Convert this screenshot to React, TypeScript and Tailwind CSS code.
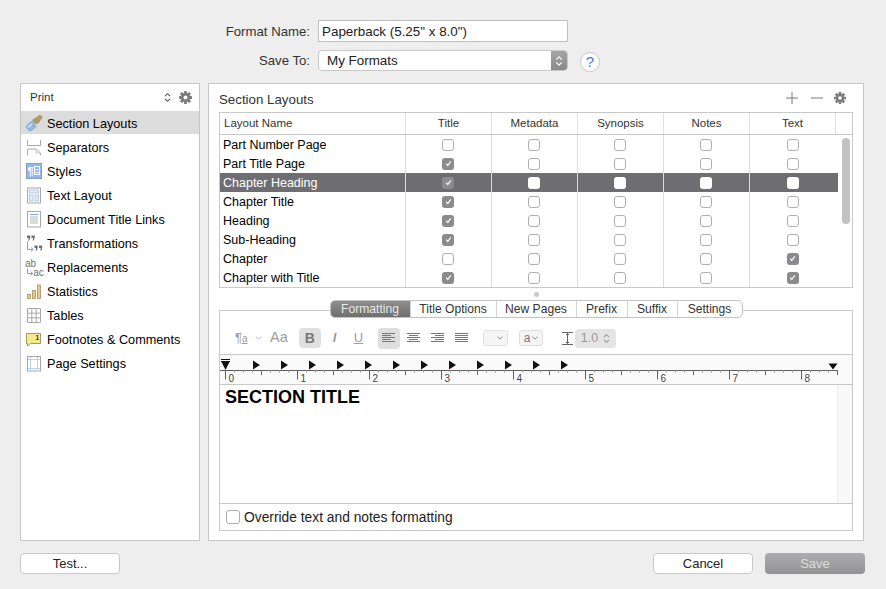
import { ReactNode } from "react";

const sans = "font-['Liberation_Sans',Arial,sans-serif]";

function Gear({ className = "" }: { className?: string }) {
    return (
        <svg viewBox="0 0 12 12" className={className} fill="#7b7b7b">
            {[0, 45, 90, 135].map((a) => (
                <rect key={a} x="4.700" y="0" width="2.600" height="12" rx=".4" transform={`rotate(${a} 6 6)`} />
            ))}
            <circle cx="6" cy="6" r="4.200" />
            <circle cx="6" cy="6" r="1.800" fill="#fff" />
        </svg>
    );
}

function UpDown({ color = "#555", className = "" }: { color?: string; className?: string }) {
    return (
        <svg viewBox="0 0 8 13" className={className} fill="none" stroke={color} strokeWidth="1.300">
            <path d="M1 5l3-3 3 3M1 8l3 3 3-3" />
        </svg>
    );
}

function Check({ checked, onDark }: { checked?: boolean; onDark?: boolean }) {
    if (checked) {
        return (
            <span className="flex h-[12px] w-[12px] items-center justify-center rounded-[3px] bg-[#8b8b8d]">
                <svg viewBox="0 0 10 10" className="h-[9px] w-[9px]" fill="none" stroke="#fff" strokeWidth="1.300">
                    <path d="M2.500 5.200l1.700 2 3.300-4.600" />
                </svg>
            </span>
        );
    }
    if (onDark) {
        return <span className="h-[12px] w-[12px] rounded-[3px] bg-white" />;
    }
    return <span className="h-[12px] w-[12px] rounded-[3px] border border-[#b0b0b0] bg-white" />;
}

// sidebar icons, drawn on a 20x20 box
const icons: Record<string, ReactNode> = {
    brush: (
        <>
            <path d="M2 13.500l5-5 5 5-4.500 4c-1.500.5-2.500 0-3.500-1-.5-1-1.500-2-2-3z" fill="#8db6ea" stroke="#7a8ea8" strokeWidth=".6" />
            <path d="M3.500 14l4-3.500 1 1-4 3.500z" fill="#dbe9fa" />
            <path d="M7.500 8l2-2 4 4-2 2z" fill="#a3a3a3" />
            <path d="M9.500 6.500l6-4 2 .5.500 1.500-4 6z" fill="#b89c62" stroke="#8a7544" strokeWidth=".5" />
        </>
    ),
    sep: (
        <>
            <path d="M3.500 3v5.500h13V3" fill="none" stroke="#a8a8a8" />
            <path d="M3.500 18.500v-6.500h8.500l4.500 4v2.500" fill="none" stroke="#a8a8a8" />
            <path d="M12 12v4h4.500" fill="none" stroke="#c4c4c4" />
        </>
    ),
    styles: (
        <>
            <rect x="2.500" y="2.500" width="15" height="15" fill="#8fb8f2" stroke="#8ea0b8" />
            <text x="3.500" y="14" fontSize="11" fontWeight="700" fill="#fff" fontFamily="Liberation Sans">¶</text>
            <rect x="10.500" y="5.500" width="5" height="8" fill="none" stroke="#fff" />
            <path d="M11.500 11.500h3M11.500 8.500h3" stroke="#fff" />
        </>
    ),
    text: (
        <>
            <rect x="3.500" y="3" width="13" height="15" fill="#fff" stroke="#a8a8a8" />
            <rect x="5.500" y="5" width="9" height="3" fill="#e3edf9" stroke="#9cb7dc" strokeWidth=".7" />
            <rect x="5.500" y="10" width="3.500" height="6" fill="#e3edf9" stroke="#9cb7dc" strokeWidth=".7" />
            <rect x="11" y="10" width="3.500" height="6" fill="#e3edf9" stroke="#9cb7dc" strokeWidth=".7" />
        </>
    ),
    doc: (
        <>
            <rect x="3.500" y="2.500" width="13" height="15.500" fill="#fff" stroke="#a8a8a8" />
            <path d="M6 5.500h8" stroke="#7ea6de" />
            <path d="M6 8h8M6 10h8M6 12h8M6 14h8" stroke="#b8b8b8" />
        </>
    ),
    trans: (
        <>
            <path d="M3 2.500h3.200v2.500l-1 2.500H4l.8-2.500H3zM7.500 2.500h3.200v2.500l-1 2.500H8.500l.8-2.500H7.500z" fill="#707070" />
            <path d="M3.500 8.500v8h5.500M7 14.500l2.200 2-2.200 2" fill="none" stroke="#6aa4e4" />
            <path d="M10.500 12.500h3.200v2.500l-1 2.500h-1.200l.8-2.500h-1.800zM15 12.500h3.200v2.500l-1 2.500H16l.8-2.500H15z" fill="#707070" />
        </>
    ),
    repl: (
        <>
            <text x="1" y="10" fontSize="10" fill="#707070" fontFamily="Liberation Sans">ab</text>
            <path d="M3.500 11.500v5h5M6.500 14.500l2.200 2-2.200 2" fill="none" stroke="#6aa4e4" />
            <text x="9.300" y="18.500" fontSize="10" fill="#707070" fontFamily="Liberation Sans">ac</text>
        </>
    ),
    stats: (
        <>
            <rect x="3.500" y="13.500" width="3" height="4" fill="#ecc98a" stroke="#a8926a" strokeWidth=".8" />
            <rect x="8.500" y="9.500" width="3" height="8" fill="#ecc98a" stroke="#a8926a" strokeWidth=".8" />
            <rect x="13.500" y="4" width="3" height="13.500" fill="#ecc98a" stroke="#a8926a" strokeWidth=".8" />
        </>
    ),
    tables: <path d="M3.500 3.500h13v14h-13zM7.800 3.500v14M12.200 3.500v14M3.500 8.200h13M3.500 12.800h13" fill="#fff" stroke="#a8a8a8" />,
    notes: (
        <>
            <path d="M2.500 4.500h14v10H6.500l-3 2.500v-2.500h-1z" fill="#f7e88a" stroke="#a09a70" />
            <text x="11.500" y="10.500" fontSize="6.500" fontWeight="700" fill="#333" fontFamily="Liberation Sans">1</text>
        </>
    ),
    page: (
        <>
            <rect x="3.500" y="3.500" width="13" height="14.500" fill="#fff" stroke="#a8a8a8" />
            <path d="M6.500 4v14M13.500 4v14M4 6.500h12M4 15.500h12" stroke="#b9d2f2" />
        </>
    ),
};

const sidebar = [
    ["brush", "Section Layouts"],
    ["sep", "Separators"],
    ["styles", "Styles"],
    ["text", "Text Layout"],
    ["doc", "Document Title Links"],
    ["trans", "Transformations"],
    ["repl", "Replacements"],
    ["stats", "Statistics"],
    ["tables", "Tables"],
    ["notes", "Footnotes & Comments"],
    ["page", "Page Settings"],
];

const layouts: [string, boolean, boolean][] = [
    ["Part Number Page", false, false],
    ["Part Title Page", true, false],
    ["Chapter Heading", true, false],
    ["Chapter Title", true, false],
    ["Heading", true, false],
    ["Sub-Heading", true, false],
    ["Chapter", false, true],
    ["Chapter with Title", true, true],
];

const tabs = [
    ["Formatting", "w-[79px]"],
    ["Title Options", "w-[86px]"],
    ["New Pages", "w-[80px]"],
    ["Prefix", "w-[51px]"],
    ["Suffix", "w-[50px]"],
    ["Settings", "w-[65px]"],
];

function Sidebar() {
    return (
        <div className="flex h-[458px] w-[180px] flex-col border border-[#c6c6c6] bg-white">
            <div className="flex h-[27px] items-center pl-[9px] pr-[7px] text-[11.500px] text-[#333]">
                <span className="flex-1">Print</span>
                <UpDown className="mr-[8px] h-[11px] w-[7px]" />
                <Gear className="h-[13px] w-[13px]" />
            </div>
            {sidebar.map(([icon, label], i) => (
                <div
                    key={label}
                    className={`mb-px flex h-[23px] items-center pl-[3px] text-[12.700px] text-black ${i === 0 ? "bg-[#dcdcdc]" : ""}`}
                >
                    <svg viewBox="0 0 20 20" className="mr-[3px] h-[20px] w-[20px]">
                        {icons[icon]}
                    </svg>
                    <span className="pt-[4px]">{label}</span>
                </div>
            ))}
        </div>
    );
}

function LayoutTable() {
    return (
        <div className="relative h-[176px] border border-[#c9c9c9] bg-white">
            <div className="flex h-[22px] border-b border-[#c9c9c9] text-[11.500px] text-[#333]">
                <div className="flex w-[186px] items-center border-r border-[#e2e2e2] pl-[4px]">Layout Name</div>
                {["Title", "Metadata", "Synopsis", "Notes", "Text"].map((c) => (
                    <div key={c} className="flex w-[86px] items-center justify-center border-r border-[#e2e2e2]">
                        {c}
                    </div>
                ))}
            </div>
            {layouts.map(([name, title, text], i) => {
                const on = i === 2;
                return (
                    <div
                        key={name}
                        className={`flex h-[19px] w-[618px] items-center text-[12.500px] ${on ? "bg-[#6e6d71] text-white" : "text-black"}`}
                    >
                        <div className="flex h-full w-[186px] items-center border-r border-[#dcdcdc] pl-[3px] pt-[2px]">{name}</div>
                        {[title, false, false, false, text].map((v, j) => (
                            <div key={j} className="flex h-full w-[86px] items-center justify-center border-r border-[#dcdcdc] pr-px last:border-r-0">
                                <Check checked={v} onDark={on} />
                            </div>
                        ))}
                    </div>
                );
            })}
            <div className="absolute right-[2px] top-[25px] h-[86px] w-[8px] rounded-full bg-[#c2c2c2]" />
        </div>
    );
}

function Ruler() {
    const inches = [0, 1, 2, 3, 4, 5, 6, 7, 8];
    const x0 = 5.5;
    const small: number[] = [];
    for (let i = 0; i <= 68; i++) small.push(i);
    const stops: number[] = [];
    for (let i = 0; i < 12; i++) stops.push(33 + i * 28);
    return (
        <svg width="634" height="29" className="block">
            <line x1="0" x2="618" y1="15.500" y2="15.500" stroke="#5f5f5f" />
            {small.map((i) => (
                <line
                    key={i}
                    x1={x0 + i * 9}
                    x2={x0 + i * 9}
                    y1="15"
                    y2={i % 4 === 0 ? 20 : 17.5}
                    stroke={i % 4 === 0 ? "#666" : "#999"}
                />
            ))}
            {inches.map((n) => (
                <g key={n}>
                    <line x1={x0 + n * 72} x2={x0 + n * 72} y1="15" y2="24.500" stroke="#5f5f5f" />
                    <text x={x0 + n * 72 + 3} y="27" fontSize="10" fill="#444" fontFamily="Liberation Sans">
                        {n}
                    </text>
                </g>
            ))}
            <path d="M1 4.500h9M1 6.500h9" stroke="#111" />
            <path d="M1.500 7h8l-4 8z" fill="#111" />
            {stops.map((x) => (
                <path key={x} d={`M${x} 5.500l7 4.500-7 4.500z`} fill="#111" />
            ))}
            <path d="M608.500 8.500h9l-4.500 6z" fill="#111" />
        </svg>
    );
}

function AlignIcon({ lines }: { lines: [number, number][] }) {
    return (
        <svg viewBox="0 0 13 10" className="h-[10px] w-[13px]" stroke="#777">
            {lines.map(([a, b], i) => (
                <line key={i} x1={a} x2={b} y1={i * 2 + 0.5} y2={i * 2 + 0.5} />
            ))}
        </svg>
    );
}

function Toolbar() {
    return (
        <div className="flex h-[43px] items-center pt-[11px] text-[#9c9c9c]">
            <span className="ml-[15px] w-[15px] text-[13px]">¶<span className="underline text-[10px]">a</span></span>
            <svg viewBox="0 0 8 5" className="ml-[5px] h-[4px] w-[7px]" fill="none" stroke="#aaa"><path d="M.5.5L4 4 7.500.5" /></svg>
            <span className="ml-[8px] text-[14.500px]">Aa</span>
            <span className="ml-[11px] flex h-[20px] w-[22px] items-center justify-center rounded-[4px] bg-[#e0e0e0] text-[14px] font-bold text-[#777]">B</span>
            <span className="ml-[12px] w-[8px] text-[13px] italic font-bold">I</span>
            <span className="ml-[13px] w-[14px] text-[13px] underline">U</span>
            <span className="ml-[10px] flex h-[21px] w-[22px] items-center justify-center rounded-[4px] bg-[#dedede]">
                <AlignIcon lines={[[0, 13], [0, 9], [0, 13], [0, 9], [0, 13]]} />
            </span>
            <span className="ml-[7px] flex w-[13px]"><AlignIcon lines={[[0, 13], [2, 11], [0, 13], [2, 11], [0, 13]]} /></span>
            <span className="ml-[11px] flex w-[13px]"><AlignIcon lines={[[0, 13], [4, 13], [0, 13], [4, 13], [0, 13]]} /></span>
            <span className="ml-[11px] flex w-[13px]"><AlignIcon lines={[[0, 13], [0, 13], [0, 13], [0, 13], [0, 13]]} /></span>
            <span className="ml-[15px] flex h-[16px] w-[25px] items-center justify-end rounded-[3px] border border-[#e2e2e2] bg-[#f5f5f5] pr-[4px]">
                <svg viewBox="0 0 8 5" className="h-[4px] w-[6px]" fill="none" stroke="#666"><path d="M.5.5L4 4 7.500.5" /></svg>
            </span>
            <span className="ml-[11px] flex h-[16px] w-[24px] items-center justify-between rounded-[3px] border border-[#dedede] bg-[#f5f5f5] px-[4px] text-[12px] text-[#777]">
                a
                <svg viewBox="0 0 8 5" className="h-[4px] w-[6px]" fill="none" stroke="#666"><path d="M.5.5L4 4 7.500.5" /></svg>
            </span>
            <svg viewBox="0 0 13 13" className="ml-[18px] h-[13px] w-[13px]" fill="none" stroke="#666">
                <path d="M1 .5h11M1 12.500h11M6.500 1v11M5 3l1.500-1.500L8 3M5 10l1.500 1.500L8 10" />
            </svg>
            <span className="ml-[1px] flex h-[19px] w-[41px] items-center justify-between rounded-[4px] bg-[#e4e4e4] px-[6px] text-[12.500px] text-[#999]">
                1.0
                <UpDown color="#999" className="h-[11px] w-[7px]" />
            </span>
        </div>
    );
}

function Editor() {
    return (
        <div className="-mt-[8px] h-[221px] border border-[#c9c9c9] bg-white">
            <Toolbar />
            <div className="h-[31px] border-y border-[#c9c9c9] bg-[#fafafa]">
                <Ruler />
            </div>
            <div className="flex h-[119px] border-b border-[#c9c9c9]">
                <div className="flex-1 pl-[5px] pt-[1px] text-[18px] font-bold leading-[22px] text-black">SECTION TITLE</div>
                <div className="w-[15px] border-l border-[#ececec] bg-[#f8f8f8]" />
            </div>
            <div className="flex h-[26px] items-center pl-[6px] text-[13.800px] text-[#222]">
                <span className="mr-[4px] h-[14px] w-[14px] rounded-[3px] border border-[#adadad] bg-white" />
                <span className="pt-[2px]">Override text and notes formatting</span>
            </div>
        </div>
    );
}

function MainPanel() {
    return (
        <div className="h-[458px] w-[656px] border border-[#c6c6c6] bg-white px-[10px]">
            <div className="flex h-[28px] items-center pr-[7px] text-[#333]">
                <span className="flex-1 pt-[4px] text-[13.300px]">Section Layouts</span>
                <svg viewBox="0 0 12 12" className="h-[12px] w-[12px]" stroke="#777"><path d="M0 6h12M6 0v12" /></svg>
                <svg viewBox="0 0 12 2" className="ml-[13px] h-[2px] w-[12px]" stroke="#777"><path d="M0 1h12" /></svg>
                <Gear className="ml-[11px] h-[12px] w-[12px]" />
            </div>
            <LayoutTable />
            <div className="flex h-[12px] items-center justify-center">
                <span className="h-[5px] w-[5px] rounded-full bg-[#c8c8c8]" />
            </div>
            <div className="relative z-10 flex justify-center">
                <div className="flex h-[18px] overflow-hidden rounded-[5px] border border-[#c4c4c4] bg-white text-[12.100px] text-[#333]">
                    {tabs.map(([t, w], i) => (
                        <span
                            key={t}
                            className={`flex items-center justify-center ${w} ${i === 0 ? "bg-gradient-to-b from-[#8e8e8e] to-[#6f6f6f] text-[#e8e8e8]" : "border-l border-[#d4d4d4]"}`}
                        >
                            {t}
                        </span>
                    ))}
                </div>
            </div>
            <Editor />
        </div>
    );
}

function Btn({ children, disabled }: { children: ReactNode; disabled?: boolean }) {
    return (
        <button
            className={`h-[21px] w-[100px] rounded-[4px] text-[13px] ${disabled ? "bg-gradient-to-b from-[#adadb0] to-[#929295] text-[#dedede]" : "border border-[#c9c9c9] bg-white text-[#222]"}`}
        >
            {children}
        </button>
    );
}

export default function App() {
    return (
        <div className={`h-[589px] w-[886px] overflow-hidden bg-[#eeeeee] pl-[20px] pr-[21px] pt-[20px] ${sans}`}>
            <div className="flex h-[22px] items-center">
                <span className="mr-[8px] w-[290px] pt-px text-right text-[13.200px] text-[#333]">Format Name:</span>
                <div className="flex h-[22px] w-[250px] items-center border border-[#c0c0c0] bg-white pl-[3px] pt-[2px] text-[13.400px] text-[#222]">
                    Paperback (5.25" x 8.0")
                </div>
            </div>
            <div className="mt-[8px] flex h-[21px] items-center">
                <span className="mr-[8px] w-[290px] text-right text-[13.200px] text-[#333]">Save To:</span>
                <div className="flex h-[21px] w-[250px] items-center overflow-hidden rounded-[4px] border border-[#c8c8c8] bg-white pl-[8px] text-[13.400px] text-[#222]">
                    <span className="flex-1 pt-px">My Formats</span>
                    <span className="flex h-full w-[16px] items-center justify-center bg-gradient-to-b from-[#a5a5a5] to-[#8a8a8a]">
                        <UpDown color="#fff" className="h-[12px] w-[8px]" />
                    </span>
                </div>
                <span className="ml-[12px] mt-[3px] flex h-[20px] w-[20px] items-center justify-center rounded-full border border-[#c8c8c8] bg-white text-[15px] text-[#3b7de0]">
                    ?
                </span>
            </div>
            <div className="mt-[12px] flex gap-[8px]">
                <Sidebar />
                <MainPanel />
            </div>
            <div className="mt-[12px] flex">
                <Btn>Test...</Btn>
                <span className="flex-1" />
                <Btn>Cancel</Btn>
                <span className="w-[12px]" />
                <Btn disabled>Save</Btn>
            </div>
        </div>
    );
}
